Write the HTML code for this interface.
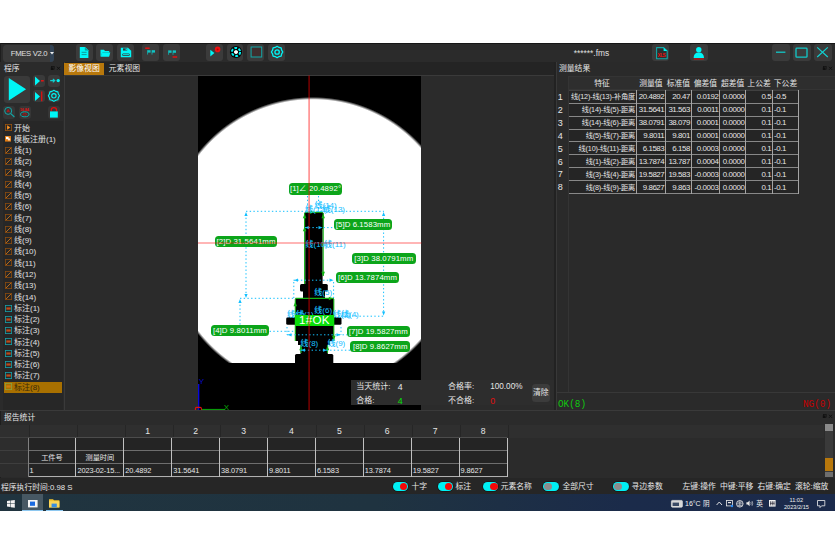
<!DOCTYPE html>
<html><head><meta charset="utf-8"><title>FMES V2.0</title>
<style>
html,body{margin:0;padding:0;background:#fff;}
body{width:835px;height:555px;position:relative;overflow:hidden;font-family:"Liberation Sans","Noto Sans CJK SC",sans-serif;font-size:7.8px;color:#d4d4d4;}
div{position:absolute;box-sizing:border-box;}
svg{position:absolute;overflow:visible;}
.t{white-space:nowrap;}
.btn{background:#3b3b3b;border-radius:3px;}
.lbl{background:#0ca51a;border-radius:3.5px;color:#fff;font-size:7.8px;letter-spacing:0.1px;white-space:nowrap;text-align:center;}
.cy{font-weight:500;color:#18c0ff;font-size:8px;white-space:nowrap;}
table{border-collapse:collapse;position:absolute;}
td{padding:0;white-space:nowrap;overflow:hidden;}
</style></head><body>

<div style="left:0px;top:43px;width:835px;height:451px;background:#2b2b2b;"></div>
<div style="left:0px;top:42.8px;width:835px;height:1px;background:#161616;"></div>
<div style="left:0px;top:43px;width:1.2px;height:451px;background:#1e1e1e;"></div>
<div style="left:3px;top:44.5px;width:50.5px;height:17.3px;background:#3a3a3a;border-radius:3.5px;"></div>
<div style="left:49.6px;top:44.5px;width:4.6px;height:17.3px;background:#324355;border-radius:0 3.5px 3.5px 0;"></div>
<div class="t" style="left:10.8px;top:44.6px;height:17.3px;line-height:17.3px;font-size:7.7px;letter-spacing:-0.33px;color:#e0e0e0;">FMES V2.0</div>
<svg style="left:49.8px;top:51.6px" width="4" height="3"><path d="M0 0H4L2 2.6Z" fill="#f0f0f0"/></svg>
<div class="btn" style="left:76px;top:44.3px;width:16.8px;height:16.6px;"></div>
<div class="btn" style="left:96.4px;top:44.3px;width:16.8px;height:16.6px;"></div>
<div class="btn" style="left:116.8px;top:44.3px;width:16.8px;height:16.6px;"></div>
<div class="btn" style="left:142px;top:44.3px;width:16.8px;height:16.6px;"></div>
<div class="btn" style="left:162.8px;top:44.3px;width:16.8px;height:16.6px;"></div>
<div class="btn" style="left:206.2px;top:44.3px;width:16.8px;height:16.6px;"></div>
<div class="btn" style="left:226.7px;top:44.3px;width:16.8px;height:16.6px;"></div>
<div class="btn" style="left:247.3px;top:44.3px;width:16.8px;height:16.6px;"></div>
<div class="btn" style="left:268.3px;top:44.3px;width:16.8px;height:16.6px;"></div>
<svg style="left:79px;top:46px" width="11" height="13" viewBox="0 0 11 13"><path d="M0.8 1H6.2L9.4 4.2V12.1H0.8Z" fill="#00f6f6"/><path d="M6.2 1V4.2H9.4" fill="#0aa" stroke="#0a8a8a" stroke-width=".5"/><path d="M2.6 6.3H7.6M2.6 8.6H7.6" stroke="#0b9a9a" stroke-width="1"/></svg>
<svg style="left:99.5px;top:48.5px" width="11" height="9" viewBox="0 0 11 9"><path d="M0.5 0.8H4L5 2H9.2V7.6H0.5Z" fill="#00f6f6"/><path d="M2.2 4.3L1 7.4" stroke="#0a9c9c" stroke-width=".6"/><path d="M2.4 3.6H10.3L9 7.6H1Z" fill="#00f6f6"/><path d="M2.3 3.55H9.2" stroke="#0a9c9c" stroke-width=".5"/></svg>
<svg style="left:119.5px;top:47px" width="12" height="11" viewBox="0 0 12 11"><path d="M0.8 0.8H8L11.2 3.8V10.2H0.8Z" fill="#00f6f6"/><path d="M3 1.3H7.2V3.6H3Z" fill="#3a3a3a"/><rect x="5.6" y="1.6" width="1.2" height="1.6" fill="#00f6f6"/><rect x="2.4" y="6.4" width="7.2" height="2.6" rx=".8" fill="#3a3a3a"/><rect x="3" y="7.2" width="6" height="1" fill="#00f6f6"/></svg>
<svg style="left:145px;top:47px" width="12" height="8" viewBox="0 0 12 8"><path d="M0.2 1.2H4.6" stroke="#f01010" stroke-width="1.4"/><path d="M2.6 3.2V7.6000000000000005" stroke="#12a8a8" stroke-width=".9"/><path d="M2.6 3.2H5.6V5.6H2.6Z" fill="#10c4c4"/><path d="M7 3.2V7.6000000000000005" stroke="#12a8a8" stroke-width=".9"/><path d="M7 3.2H10V5.6H7Z" fill="#10c4c4"/></svg>
<svg style="left:167px;top:50px" width="12" height="9" viewBox="0 0 12 9"><path d="M1.6 0.4V4.800000000000001" stroke="#12a8a8" stroke-width=".9"/><path d="M1.6 0.4H4.6V2.8H1.6Z" fill="#10c4c4"/><path d="M6 0.4V4.800000000000001" stroke="#12a8a8" stroke-width=".9"/><path d="M6 0.4H9V2.8H6Z" fill="#10c4c4"/><path d="M5.6 7H10.2" stroke="#f01010" stroke-width="1.4"/></svg>
<svg style="left:209px;top:46px" width="13" height="12" viewBox="0 0 13 12"><path d="M1.3 3.8L5.4 7.1L1.3 10.4Z" fill="#00f6f6"/><circle cx="8.6" cy="3.4" r="2.8" fill="#f01010"/><circle cx="8.6" cy="3.4" r="1" fill="#c00000"/></svg>
<svg style="left:228.7px;top:45.3px" width="14" height="14" viewBox="0 0 14 14"><circle cx="7" cy="7" r="6.1" fill="#050505"/><circle cx="7" cy="7" r="4.1" fill="none" stroke="#00f6f6" stroke-width="2" stroke-dasharray="2.7 1.6"/><path d="M7 4.9L8.9 6L8.9 8.1L7 9.2L5.1 8.1L5.1 6Z" fill="#fff"/></svg>
<svg style="left:250px;top:46.3px" width="13" height="12" viewBox="0 0 13 12"><rect x="1.1" y="1" width="10.6" height="10" fill="#3e2e2e" stroke="#12a8a8" stroke-width="1"/></svg>
<svg style="left:270px;top:45.3px" width="14" height="14" viewBox="0 0 14 14"><path d="M12.80 7.00 L11.63 8.88 L11.13 11.03 L8.98 11.53 L7.10 12.70 L5.22 11.53 L3.07 11.03 L2.57 8.88 L1.40 7.00 L2.57 5.12 L3.07 2.97 L5.22 2.47 L7.10 1.30 L8.98 2.47 L11.13 2.97 L11.63 5.12Z" fill="none" stroke="#00f6f6" stroke-width="1.3" stroke-linejoin="round"/><circle cx="7.1" cy="7" r="2.2" fill="none" stroke="#00f6f6" stroke-width="1.3"/></svg>
<div class="t" style="left:573.8px;top:45.1px;height:16px;line-height:16px;font-size:8.4px;color:#e0e0e0;">******.fms</div>
<div class="btn" style="left:652px;top:44.3px;width:17px;height:16.6px;"></div>
<div class="btn" style="left:690px;top:44.3px;width:17.5px;height:16.6px;"></div>
<div class="btn" style="left:772px;top:44.3px;width:17.6px;height:16.6px;"></div>
<div class="btn" style="left:793px;top:44.3px;width:17.6px;height:16.6px;"></div>
<div class="btn" style="left:814px;top:44.3px;width:17.6px;height:16.6px;"></div>
<svg style="left:654.5px;top:45.5px" width="14" height="15" viewBox="0 0 14 15"><path d="M1.6 1.6H8.6L12.2 5V12.8H1.6Z" fill="#2e2e2e" stroke="#12a8a8" stroke-width="1.1" stroke-linejoin="round"/><path d="M8.6 1.6V5H12.2Z" fill="#00f6f6"/><text x="2.6" y="11.2" font-size="4.6" font-weight="bold" fill="#f01010" font-family="Liberation Sans,sans-serif" textLength="8">XLS</text></svg>
<svg style="left:692px;top:45.5px" width="14" height="15" viewBox="0 0 14 15"><circle cx="6.8" cy="3.7" r="2.7" fill="#00f6f6"/><path d="M1.6 12.1Q1.6 6.4 6.8 6.4Q12 6.4 12 12.1Z" fill="#00f6f6"/><path d="M1.8 13H11.8" stroke="#e01010" stroke-width="1.1"/></svg>
<svg style="left:772px;top:44px" width="18" height="17" viewBox="0 0 18 17"><path d="M4 8.2H13.4" stroke="#12c8c8" stroke-width="1.3"/></svg>
<svg style="left:793px;top:44px" width="18" height="17" viewBox="0 0 18 17"><rect x="3" y="4.2" width="11" height="9" rx=".8" fill="none" stroke="#12c8c8" stroke-width="1.3"/></svg>
<svg style="left:814px;top:44px" width="18" height="17" viewBox="0 0 18 17"><path d="M3.2 3.4L13.8 13M13.8 3.4L3.2 13" stroke="#12d0d0" stroke-width="1.2"/></svg>
<div style="left:0px;top:62px;width:835px;height:13.5px;background:#242424;"></div>
<div style="left:0px;top:62px;width:63px;height:349px;background:#2b2b2b;"></div>
<div style="left:3px;top:121px;width:59.5px;height:289px;background:#272727;"></div>
<div class="t" style="left:4px;top:62.5px;height:12px;line-height:12px;color:#e6e6e6;">程序</div>
<div style="left:63.6px;top:62px;width:1px;height:348.5px;background:#3a3a3a;"></div>
<div style="left:3.6px;top:75.6px;width:26.8px;height:27px;background:#3a3a3a;border-radius:3px;"></div>
<div style="left:33.3px;top:75.2px;width:12px;height:11.6px;background:#3a3a3a;border-radius:3px;"></div>
<div style="left:47.7px;top:75.2px;width:12px;height:11.6px;background:#3a3a3a;border-radius:3px;"></div>
<div style="left:33.3px;top:89.6px;width:12px;height:12.2px;background:#3a3a3a;border-radius:3px;"></div>
<div style="left:47.7px;top:89.6px;width:12px;height:12.2px;background:#3a3a3a;border-radius:3px;"></div>
<div style="left:3.4px;top:106.2px;width:12px;height:12.6px;background:#363636;border-radius:3px;"></div>
<div style="left:18.5px;top:106.2px;width:12px;height:12.6px;background:#363636;border-radius:3px;"></div>
<div style="left:47.7px;top:106.2px;width:12px;height:12.6px;background:#363636;border-radius:3px;"></div>
<svg style="left:3px;top:75px" width="28" height="28" viewBox="0 0 28 28"><path d="M5.8 3.1L23.1 14.2L5.8 25.4Z" fill="#00f6f6"/></svg>
<svg style="left:33px;top:75px" width="13" height="12" viewBox="0 0 13 12"><path d="M2 1.5L7 6L2 10.5Z" fill="#00f6f6"/><path d="M8 5.8H10.8" stroke="#f01010" stroke-width="1.4"/></svg>
<svg style="left:47.5px;top:75px" width="13" height="12" viewBox="0 0 13 12"><path d="M2.2 5.6H7M4.8 3.9L6.8 5.6L4.8 7.3" stroke="#10d0d0" stroke-width="1.1" fill="none"/><circle cx="10.2" cy="5.6" r="1.65" fill="#00f6f6"/></svg>
<svg style="left:33px;top:89.5px" width="13" height="13" viewBox="0 0 13 13"><path d="M2 1.9L7 6.4L2 10.9Z" fill="#00f6f6"/><path d="M8.7 1.5V11.3" stroke="#e01010" stroke-width="1.3"/></svg>
<svg style="left:47px;top:88.8px" width="14" height="14" viewBox="0 0 14 14"><path d="M12.50 6.80 L11.35 8.64 L10.86 10.76 L8.74 11.25 L6.90 12.40 L5.06 11.25 L2.94 10.76 L2.45 8.64 L1.30 6.80 L2.45 4.96 L2.94 2.84 L5.06 2.35 L6.90 1.20 L8.74 2.35 L10.86 2.84 L11.35 4.96Z" fill="none" stroke="#00f6f6" stroke-width="1.1" stroke-linejoin="round"/><circle cx="6.9" cy="6.8" r="2.2" fill="none" stroke="#00f6f6" stroke-width="1.1"/></svg>
<svg style="left:3px;top:106px" width="13" height="13" viewBox="0 0 13 13"><circle cx="5.2" cy="4.9" r="3.5" fill="none" stroke="#12a8a8" stroke-width="1"/><path d="M7.8 7.6L11.4 11" stroke="#12a8a8" stroke-width="1.1"/><path d="M4 6.2L5.2 3.4L6.4 6.2M4.5 5.3H5.9" stroke="#e01010" stroke-width=".7" fill="none"/></svg>
<svg style="left:18px;top:106px" width="13" height="13" viewBox="0 0 13 13"><text x="1.8" y="4.9" font-size="3.8" font-weight="bold" fill="#e01010" font-family="Liberation Sans,sans-serif" textLength="9">16.84</text><ellipse cx="6.8" cy="8.3" rx="4.2" ry="2.5" fill="none" stroke="#12a8a8" stroke-width="1"/><ellipse cx="6.8" cy="8.3" rx="1.8" ry="1" fill="none" stroke="#c01010" stroke-width=".8"/></svg>
<svg style="left:47px;top:106px" width="14" height="13" viewBox="0 0 14 13"><path d="M4.2 5.6V4.4A2.7 2.7 0 0 1 9.6 4.4V5.6" fill="none" stroke="#e01010" stroke-width="1.2"/><rect x="3" y="5.4" width="7.8" height="6.2" fill="#00f6f6"/></svg>
<div class="t" style="left:14px;top:122.5px;height:12px;line-height:12px;color:#e0e0e0;font-size:8px;">开始</div>
<svg style="left:5px;top:124.2px" width="7" height="7"><rect x="0.4" y="0.4" width="6.2" height="6.2" fill="none" stroke="#9a5410" stroke-width="0.8"/><path d="M2.1 1.3L5.2 3.5L2.1 5.7Z" fill="#ff9422"/></svg>
<div class="t" style="left:14px;top:133.76999999999998px;height:12px;line-height:12px;color:#e0e0e0;font-size:8px;">模板注册(1)</div>
<svg style="left:5.4px;top:136.07px" width="6" height="6"><rect x="0" y="0" width="6" height="5.6" fill="#e07a10"/><rect x="1" y="0.8" width="2.6" height="2.4" fill="#fff"/><rect x="3" y="2.4" width="2.2" height="2" fill="#fff" opacity=".85"/></svg>
<div class="t" style="left:14px;top:145.04px;height:12px;line-height:12px;color:#e0e0e0;font-size:8px;">线(1)</div>
<svg style="left:5px;top:146.74px" width="7" height="7"><rect x="0.4" y="0.4" width="6.2" height="6.2" fill="none" stroke="#8a4c10" stroke-width="0.8"/><path d="M1 6L6 1" stroke="#d87818" stroke-width="0.8"/></svg>
<div class="t" style="left:14px;top:156.31px;height:12px;line-height:12px;color:#e0e0e0;font-size:8px;">线(2)</div>
<svg style="left:5px;top:158.01000000000002px" width="7" height="7"><rect x="0.4" y="0.4" width="6.2" height="6.2" fill="none" stroke="#8a4c10" stroke-width="0.8"/><path d="M1 6L6 1" stroke="#d87818" stroke-width="0.8"/></svg>
<div class="t" style="left:14px;top:167.57999999999998px;height:12px;line-height:12px;color:#e0e0e0;font-size:8px;">线(3)</div>
<svg style="left:5px;top:169.28px" width="7" height="7"><rect x="0.4" y="0.4" width="6.2" height="6.2" fill="none" stroke="#8a4c10" stroke-width="0.8"/><path d="M1 6L6 1" stroke="#d87818" stroke-width="0.8"/></svg>
<div class="t" style="left:14px;top:178.84999999999997px;height:12px;line-height:12px;color:#e0e0e0;font-size:8px;">线(4)</div>
<svg style="left:5px;top:180.54999999999998px" width="7" height="7"><rect x="0.4" y="0.4" width="6.2" height="6.2" fill="none" stroke="#8a4c10" stroke-width="0.8"/><path d="M1 6L6 1" stroke="#d87818" stroke-width="0.8"/></svg>
<div class="t" style="left:14px;top:190.12px;height:12px;line-height:12px;color:#e0e0e0;font-size:8px;">线(5)</div>
<svg style="left:5px;top:191.82000000000002px" width="7" height="7"><rect x="0.4" y="0.4" width="6.2" height="6.2" fill="none" stroke="#8a4c10" stroke-width="0.8"/><path d="M1 6L6 1" stroke="#d87818" stroke-width="0.8"/></svg>
<div class="t" style="left:14px;top:201.39px;height:12px;line-height:12px;color:#e0e0e0;font-size:8px;">线(6)</div>
<svg style="left:5px;top:203.09px" width="7" height="7"><rect x="0.4" y="0.4" width="6.2" height="6.2" fill="none" stroke="#8a4c10" stroke-width="0.8"/><path d="M1 6L6 1" stroke="#d87818" stroke-width="0.8"/></svg>
<div class="t" style="left:14px;top:212.65999999999997px;height:12px;line-height:12px;color:#e0e0e0;font-size:8px;">线(7)</div>
<svg style="left:5px;top:214.35999999999999px" width="7" height="7"><rect x="0.4" y="0.4" width="6.2" height="6.2" fill="none" stroke="#8a4c10" stroke-width="0.8"/><path d="M1 6L6 1" stroke="#d87818" stroke-width="0.8"/></svg>
<div class="t" style="left:14px;top:223.92999999999998px;height:12px;line-height:12px;color:#e0e0e0;font-size:8px;">线(8)</div>
<svg style="left:5px;top:225.63px" width="7" height="7"><rect x="0.4" y="0.4" width="6.2" height="6.2" fill="none" stroke="#8a4c10" stroke-width="0.8"/><path d="M1 6L6 1" stroke="#d87818" stroke-width="0.8"/></svg>
<div class="t" style="left:14px;top:235.2px;height:12px;line-height:12px;color:#e0e0e0;font-size:8px;">线(9)</div>
<svg style="left:5px;top:236.9px" width="7" height="7"><rect x="0.4" y="0.4" width="6.2" height="6.2" fill="none" stroke="#8a4c10" stroke-width="0.8"/><path d="M1 6L6 1" stroke="#d87818" stroke-width="0.8"/></svg>
<div class="t" style="left:14px;top:246.46999999999997px;height:12px;line-height:12px;color:#e0e0e0;font-size:8px;">线(10)</div>
<svg style="left:5px;top:248.17px" width="7" height="7"><rect x="0.4" y="0.4" width="6.2" height="6.2" fill="none" stroke="#8a4c10" stroke-width="0.8"/><path d="M1 6L6 1" stroke="#d87818" stroke-width="0.8"/></svg>
<div class="t" style="left:14px;top:257.74px;height:12px;line-height:12px;color:#e0e0e0;font-size:8px;">线(11)</div>
<svg style="left:5px;top:259.44px" width="7" height="7"><rect x="0.4" y="0.4" width="6.2" height="6.2" fill="none" stroke="#8a4c10" stroke-width="0.8"/><path d="M1 6L6 1" stroke="#d87818" stroke-width="0.8"/></svg>
<div class="t" style="left:14px;top:269.01px;height:12px;line-height:12px;color:#e0e0e0;font-size:8px;">线(12)</div>
<svg style="left:5px;top:270.71px" width="7" height="7"><rect x="0.4" y="0.4" width="6.2" height="6.2" fill="none" stroke="#8a4c10" stroke-width="0.8"/><path d="M1 6L6 1" stroke="#d87818" stroke-width="0.8"/></svg>
<div class="t" style="left:14px;top:280.28px;height:12px;line-height:12px;color:#e0e0e0;font-size:8px;">线(13)</div>
<svg style="left:5px;top:281.97999999999996px" width="7" height="7"><rect x="0.4" y="0.4" width="6.2" height="6.2" fill="none" stroke="#8a4c10" stroke-width="0.8"/><path d="M1 6L6 1" stroke="#d87818" stroke-width="0.8"/></svg>
<div class="t" style="left:14px;top:291.54999999999995px;height:12px;line-height:12px;color:#e0e0e0;font-size:8px;">线(14)</div>
<svg style="left:5px;top:293.24999999999994px" width="7" height="7"><rect x="0.4" y="0.4" width="6.2" height="6.2" fill="none" stroke="#8a4c10" stroke-width="0.8"/><path d="M1 6L6 1" stroke="#d87818" stroke-width="0.8"/></svg>
<div class="t" style="left:14px;top:302.82px;height:12px;line-height:12px;color:#e0e0e0;font-size:8px;">标注(1)</div>
<svg style="left:5px;top:304.52px" width="7" height="7"><rect x="0.4" y="0.4" width="6.2" height="6.2" fill="none" stroke="#18a0a8" stroke-width="0.8"/><rect x="1.3" y="2.4" width="4.4" height="2.2" fill="#c04a18"/></svg>
<div class="t" style="left:14px;top:314.09px;height:12px;line-height:12px;color:#e0e0e0;font-size:8px;">标注(2)</div>
<svg style="left:5px;top:315.78999999999996px" width="7" height="7"><rect x="0.4" y="0.4" width="6.2" height="6.2" fill="none" stroke="#18a0a8" stroke-width="0.8"/><rect x="1.3" y="2.4" width="4.4" height="2.2" fill="#c04a18"/></svg>
<div class="t" style="left:14px;top:325.35999999999996px;height:12px;line-height:12px;color:#e0e0e0;font-size:8px;">标注(3)</div>
<svg style="left:5px;top:327.05999999999995px" width="7" height="7"><rect x="0.4" y="0.4" width="6.2" height="6.2" fill="none" stroke="#18a0a8" stroke-width="0.8"/><rect x="1.3" y="2.4" width="4.4" height="2.2" fill="#c04a18"/></svg>
<div class="t" style="left:14px;top:336.63px;height:12px;line-height:12px;color:#e0e0e0;font-size:8px;">标注(4)</div>
<svg style="left:5px;top:338.33px" width="7" height="7"><rect x="0.4" y="0.4" width="6.2" height="6.2" fill="none" stroke="#18a0a8" stroke-width="0.8"/><rect x="1.3" y="2.4" width="4.4" height="2.2" fill="#c04a18"/></svg>
<div class="t" style="left:14px;top:347.9px;height:12px;line-height:12px;color:#e0e0e0;font-size:8px;">标注(5)</div>
<svg style="left:5px;top:349.59999999999997px" width="7" height="7"><rect x="0.4" y="0.4" width="6.2" height="6.2" fill="none" stroke="#18a0a8" stroke-width="0.8"/><rect x="1.3" y="2.4" width="4.4" height="2.2" fill="#c04a18"/></svg>
<div class="t" style="left:14px;top:359.16999999999996px;height:12px;line-height:12px;color:#e0e0e0;font-size:8px;">标注(6)</div>
<svg style="left:5px;top:360.86999999999995px" width="7" height="7"><rect x="0.4" y="0.4" width="6.2" height="6.2" fill="none" stroke="#18a0a8" stroke-width="0.8"/><rect x="1.3" y="2.4" width="4.4" height="2.2" fill="#c04a18"/></svg>
<div class="t" style="left:14px;top:370.44px;height:12px;line-height:12px;color:#e0e0e0;font-size:8px;">标注(7)</div>
<svg style="left:5px;top:372.14px" width="7" height="7"><rect x="0.4" y="0.4" width="6.2" height="6.2" fill="none" stroke="#18a0a8" stroke-width="0.8"/><rect x="1.3" y="2.4" width="4.4" height="2.2" fill="#c04a18"/></svg>
<div style="left:3.5px;top:381.71px;width:58.5px;height:11.1px;background:#a87000;"></div>
<div class="t" style="left:14px;top:381.71px;height:12px;line-height:12px;color:#3a2a08;font-size:8px;">标注(8)</div>
<svg style="left:5px;top:383.40999999999997px" width="7" height="7"><rect x="0.4" y="0.4" width="6.2" height="6.2" fill="none" stroke="#8aa040" stroke-width="0.8"/><rect x="1.3" y="2.4" width="4.4" height="2.2" fill="#d07a10"/></svg>
<svg style="left:50px;top:66px" width="11" height="5"><rect x="0.8" y="1.4" width="2.6" height="2.6" fill="#111"/><rect x="1.6" y="0.6" width="2.6" height="2.6" fill="none" stroke="#111" stroke-width=".7"/><path d="M7 0.8L10 3.8M10 0.8L7 3.8" stroke="#111" stroke-width="1"/></svg>
<div style="left:64.3px;top:63px;width:40.2px;height:11.6px;background:#b8780c;"></div>
<div class="t" style="left:68.5px;top:62.8px;height:12px;line-height:12px;color:#fff;">影像视图</div>
<div class="t" style="left:108.8px;top:62.8px;height:12px;line-height:12px;color:#e6e6e6;">元素视图</div>
<div style="left:64px;top:74.8px;width:490px;height:0.8px;background:#3a3a3a;"></div>
<div style="left:198.2px;top:75.5px;width:223.10000000000002px;height:334.5px;background:#000;overflow:hidden;">
<div style="left:0;top:0;width:223.10000000000002px;height:287.5px;background:radial-gradient(circle at 114.80000000000001px 167.4px,#fff 0,#fff 143.7px,#000 146.5px);"></div>
</div>
<svg style="left:0;top:0" width="835" height="555" viewBox="0 0 835 555">
<g fill="#000">
<rect x="304.2" y="212" width="19.2" height="17" rx="1.5"/><rect x="305.2" y="225" width="17.4" height="60"/>
<rect x="300" y="284" width="27.8" height="7.6" rx="1.5"/>
<rect x="303" y="290" width="22" height="9"/>
<rect x="295.3" y="298" width="38.5" height="43" rx="1"/>
<rect x="286.2" y="317.2" width="55.3" height="7.6" rx="1.5"/>
<rect x="298" y="340" width="32" height="5"/>
<rect x="300.5" y="344" width="27.3" height="11"/>
<rect x="295" y="354" width="38.3" height="10" rx="1.5"/>
</g>
<g stroke="#14b414" stroke-width="1.1" fill="none">
<path d="M304.6 213V284"/><path d="M323.2 213V276"/>
<path d="M305 212.3H323"/>
<path d="M295.5 298.4H333.6"/>
<path d="M295.3 299V341"/><path d="M333.8 299V341"/>
<path d="M301 345V353"/><path d="M327.5 345V353"/>
</g>
<path d="M304.6 213.8L302.84000000000003 218.2L306.36 218.2Z" fill="#14b414"/>
<path d="M323.2 213.8L321.44 218.2L324.96 218.2Z" fill="#14b414"/>
<path d="M304.6 226.8L302.84000000000003 231.2L306.36 231.2Z" fill="#14b414"/>
<path d="M323.2 276.2L321.44 271.8L324.96 271.8Z" fill="#14b414"/>
<path d="M333.2 298.4L328.8 296.64L328.8 300.15999999999997Z" fill="#14b414"/>
<path d="M295.3 301.8L293.54 306.2L297.06 306.2Z" fill="#14b414"/>
<path d="M333.8 340.2L332.04 335.8L335.56 335.8Z" fill="#14b414"/>
<path d="M301 345.8L299.24 350.2L302.76 350.2Z" fill="#14b414"/>
<path d="M327.5 345.8L325.74 350.2L329.26 350.2Z" fill="#14b414"/>
<path d="M314.2 212.3L309.8 210.54000000000002L309.8 214.06Z" fill="#14b414"/>
<g stroke="#14c0ff" stroke-width="1" fill="none" stroke-dasharray="1.4 2.3">
<path d="M246 211.3H384"/>
<path d="M246 214V296"/>
<path d="M383.6 214V313"/>
<path d="M240 298.3H295"/>
<path d="M240 301V329"/>
<path d="M240 331.3H295"/>
<path d="M341 316.2H384"/>
<path d="M293.5 280.2H334"/>
<path d="M293.8 282V298"/><path d="M333.6 282V298"/>
<path d="M287 334.8H347"/>
<path d="M287 327V335"/><path d="M341 327V335"/>
<path d="M300.5 350.2H350.5"/>
<path d="M305 227.6H334"/>
<path d="M307.5 196V211"/><path d="M318.5 196V211"/>
</g>
<path d="M246 212.0L244.4 216.0L247.6 216.0Z" fill="#14c0ff"/>
<path d="M246 298.0L244.4 294.0L247.6 294.0Z" fill="#14c0ff"/>
<path d="M383.6 212.0L382.0 216.0L385.20000000000005 216.0Z" fill="#14c0ff"/>
<path d="M383.6 315.5L382.0 311.5L385.20000000000005 311.5Z" fill="#14c0ff"/>
<path d="M240 299.0L238.4 303.0L241.6 303.0Z" fill="#14c0ff"/>
<path d="M240 331.0L238.4 327.0L241.6 327.0Z" fill="#14c0ff"/>
<path d="M294.0 280.2L298.0 278.59999999999997L298.0 281.8Z" fill="#14c0ff"/>
<path d="M333.5 280.2L329.5 278.59999999999997L329.5 281.8Z" fill="#14c0ff"/>
<path d="M287.5 334.8L291.5 333.2L291.5 336.40000000000003Z" fill="#14c0ff"/>
<path d="M340.5 334.8L336.5 333.2L336.5 336.40000000000003Z" fill="#14c0ff"/>
<path d="M301.0 350.2L305.0 348.59999999999997L305.0 351.8Z" fill="#14c0ff"/>
<path d="M327.0 350.2L323.0 348.59999999999997L323.0 351.8Z" fill="#14c0ff"/>
<path d="M305.0 227.6L309.0 226.0L309.0 229.2Z" fill="#14c0ff"/>
<path d="M322.5 227.6L318.5 226.0L318.5 229.2Z" fill="#14c0ff"/>
<path d="M198.7 384V410" stroke="#0808e8" stroke-width="1.3"/>
<path d="M201 409.5H225" stroke="#089808" stroke-width="1.2"/>
<path d="M195.4 410V408.6Q195.4 407.4 196.6 407.4H200.2Q201.4 407.4 201.4 408.6V410" fill="none" stroke="#e01010" stroke-width="1.1"/>
<text x="198.8" y="384.2" font-size="8" fill="#0a0ad0" font-family="Liberation Sans,sans-serif">Y</text>
<text x="223.8" y="409.8" font-size="8" fill="#08a808" font-family="Liberation Sans,sans-serif">X</text>
</svg>
<div class="cy" style="left:314.5px;top:200.5px;height:9px;line-height:9px;">线(14)</div>
<div class="cy" style="left:305px;top:205px;height:9px;line-height:9px;">线(12)</div>
<div class="cy" style="left:322.8px;top:205px;height:9px;line-height:9px;">线(13)</div>
<div class="cy" style="left:305.5px;top:240px;height:9px;line-height:9px;">线(10)</div>
<div class="cy" style="left:324px;top:240px;height:9px;line-height:9px;">线(11)</div>
<div class="cy" style="left:314.3px;top:288px;height:9px;line-height:9px;">线(5)</div>
<div class="cy" style="left:314.3px;top:306.2px;height:9px;line-height:9px;">线(6)</div>
<div class="cy" style="left:287px;top:310px;height:9px;line-height:9px;">线(7)</div>
<div class="cy" style="left:296px;top:310px;height:9px;line-height:9px;">线(1)</div>
<div class="cy" style="left:333px;top:310px;height:9px;line-height:9px;">线(2)</div>
<div class="cy" style="left:341px;top:310px;height:9px;line-height:9px;">线(4)</div>
<div class="cy" style="left:300.5px;top:339.2px;height:9px;line-height:9px;">线(8)</div>
<div class="cy" style="left:327.5px;top:339.2px;height:9px;line-height:9px;">线(9)</div>
<div class="lbl" style="left:289px;top:183.4px;width:53px;height:11.199999999999989px;line-height:11.199999999999989px;">[1]∠ 20.4892°</div>
<div class="lbl" style="left:334px;top:219.1px;width:58px;height:11.099999999999994px;line-height:11.099999999999994px;">[5]D 6.1583mm</div>
<div class="lbl" style="left:215px;top:236px;width:62px;height:11.199999999999989px;line-height:11.199999999999989px;">[2]D 31.5641mm</div>
<div class="lbl" style="left:352px;top:253.3px;width:63.60000000000002px;height:11.199999999999989px;line-height:11.199999999999989px;">[3]D 38.0791mm</div>
<div class="lbl" style="left:336px;top:271.8px;width:63px;height:11.099999999999966px;line-height:11.099999999999966px;">[6]D 13.7874mm</div>
<div class="lbl" style="left:210.8px;top:325px;width:58.19999999999999px;height:11.199999999999989px;line-height:11.199999999999989px;">[4]D 9.8011mm</div>
<div class="lbl" style="left:346.7px;top:326.2px;width:63.10000000000002px;height:11.300000000000011px;line-height:11.300000000000011px;">[7]D 19.5827mm</div>
<div class="lbl" style="left:350.4px;top:341.2px;width:59.60000000000002px;height:11.199999999999989px;line-height:11.199999999999989px;">[8]D 9.8627mm</div>
<div style="left:294.5px;top:315px;width:39.7px;height:10.6px;line-height:10.9px;background:#0ade0a;color:#fff;font-size:11.6px;letter-spacing:0.3px;text-align:center;white-space:nowrap;">1#OK</div>
<svg style="left:0;top:0" width="835" height="555" viewBox="0 0 835 555"><path d="M309.1 75.5V410" stroke="#ff0000" stroke-width="1.5" opacity=".48"/><path d="M198 242.9H421.5" stroke="#ff0000" stroke-width="1.5" opacity=".38"/></svg>
<div style="left:351px;top:379.8px;width:203px;height:25.4px;background:#2d2d2d;"></div>
<div class="t" style="left:356.3px;top:381.5px;height:10px;line-height:10px;color:#e6e6e6;font-size:8px;">当天统计:</div>
<div class="t" style="left:397.8px;top:381.5px;height:10px;line-height:10px;color:#e6e6e6;font-size:8.8px;">4</div>
<div class="t" style="left:448px;top:381.5px;height:10px;line-height:10px;color:#e6e6e6;font-size:8px;">合格率:</div>
<div class="t" style="left:490.2px;top:381.5px;height:10px;line-height:10px;color:#e6e6e6;font-size:8.2px;">100.00%</div>
<div class="t" style="left:356.3px;top:396px;height:10px;line-height:10px;color:#e6e6e6;font-size:8px;">合格:</div>
<div class="t" style="left:397.8px;top:396px;height:10px;line-height:10px;color:#08e008;font-size:8.8px;">4</div>
<div class="t" style="left:448px;top:396px;height:10px;line-height:10px;color:#e6e6e6;font-size:8px;">不合格:</div>
<div class="t" style="left:490.2px;top:396px;height:10px;line-height:10px;color:#e01010;font-size:8.8px;">0</div>
<div class="t" style="left:531.8px;top:384.2px;width:18px;height:18px;line-height:18px;background:#3c3c3c;border-radius:3.5px;text-align:center;color:#e6e6e6;">清除</div>
<div style="left:553.8px;top:62px;width:1.9px;height:348.5px;background:#222;"></div>
<div style="left:555.7px;top:62px;width:0.8px;height:348.5px;background:#383838;"></div>
<div style="left:556.5px;top:62px;width:278.5px;height:348.5px;background:#2a2a2a;"></div>
<div class="t" style="left:559px;top:62.5px;height:12px;line-height:12px;color:#e6e6e6;">测量结果</div>
<svg style="left:822px;top:66px" width="11" height="5"><rect x="0.8" y="1.4" width="2.6" height="2.6" fill="#111"/><rect x="1.6" y="0.6" width="2.6" height="2.6" fill="none" stroke="#111" stroke-width=".7"/><path d="M7 0.8L10 3.8M10 0.8L7 3.8" stroke="#111" stroke-width="1"/></svg>
<div style="left:568px;top:76px;width:267px;height:14px;background:#2e2e2e;border-top:0.7px solid #343434;border-bottom:0.7px solid #343434;"></div>
<div class="t" style="left:568px;top:76.6px;width:68.20000000000005px;height:13.4px;line-height:13.4px;text-align:center;color:#e6e6e6;">特征</div>
<div class="t" style="left:636.2px;top:76.6px;width:29.299999999999955px;height:13.4px;line-height:13.4px;text-align:center;color:#e6e6e6;">测量值</div>
<div class="t" style="left:665.5px;top:76.6px;width:25.700000000000045px;height:13.4px;line-height:13.4px;text-align:center;color:#e6e6e6;">标准值</div>
<div class="t" style="left:691.2px;top:76.6px;width:28.399999999999977px;height:13.4px;line-height:13.4px;text-align:center;color:#e6e6e6;">偏差值</div>
<div class="t" style="left:719.6px;top:76.6px;width:26.0px;height:13.4px;line-height:13.4px;text-align:center;color:#e6e6e6;">超差值</div>
<div class="t" style="left:745.6px;top:76.6px;width:26.899999999999977px;height:13.4px;line-height:13.4px;text-align:center;color:#e6e6e6;">上公差</div>
<div class="t" style="left:772.5px;top:76.6px;width:26.0px;height:13.4px;line-height:13.4px;text-align:center;color:#e6e6e6;">下公差</div>
<div style="left:568px;top:90.2px;width:230.5px;height:103.52px;background:#252525;"></div>
<div class="t" style="left:557.8px;top:90.8px;height:12.94px;line-height:12.94px;color:#e6e6e6;font-size:9px;">1</div>
<div class="t" style="left:568px;top:91.0px;width:68.20000000000005px;height:12.94px;line-height:12.94px;text-align:right;padding-right:1.2px;color:#e6e6e6;font-size:7.2px;letter-spacing:-0.15px;">线(12)-线(13)-补角度</div>
<div class="t" style="left:636.2px;top:91.0px;width:29.299999999999955px;height:12.94px;line-height:12.94px;text-align:right;padding-right:1.2px;color:#e6e6e6;font-size:7.9px;letter-spacing:-0.42px;">20.4892</div>
<div class="t" style="left:665.5px;top:91.0px;width:25.700000000000045px;height:12.94px;line-height:12.94px;text-align:right;padding-right:1.2px;color:#e6e6e6;font-size:7.9px;letter-spacing:-0.42px;">20.47</div>
<div class="t" style="left:691.2px;top:91.0px;width:28.399999999999977px;height:12.94px;line-height:12.94px;text-align:right;padding-right:1.2px;color:#e6e6e6;font-size:7.9px;letter-spacing:-0.42px;">0.0192</div>
<div class="t" style="left:719.6px;top:91.0px;width:26.0px;height:12.94px;line-height:12.94px;text-align:right;padding-right:1.2px;color:#e6e6e6;font-size:7.9px;letter-spacing:-0.42px;">0.0000</div>
<div class="t" style="left:745.6px;top:91.0px;width:26.899999999999977px;height:12.94px;line-height:12.94px;text-align:right;padding-right:1.2px;color:#e6e6e6;font-size:7.9px;letter-spacing:-0.42px;">0.5</div>
<div class="t" style="left:772.5px;top:91.0px;width:26.0px;height:12.94px;line-height:12.94px;text-align:left;padding-left:1.5px;color:#e6e6e6;font-size:7.9px;letter-spacing:-0.42px;">-0.5</div>
<div class="t" style="left:557.8px;top:103.74px;height:12.94px;line-height:12.94px;color:#e6e6e6;font-size:9px;">2</div>
<div class="t" style="left:568px;top:103.94px;width:68.20000000000005px;height:12.94px;line-height:12.94px;text-align:right;padding-right:1.2px;color:#e6e6e6;font-size:7.2px;letter-spacing:-0.15px;">线(14)-线(5)-距离</div>
<div class="t" style="left:636.2px;top:103.94px;width:29.299999999999955px;height:12.94px;line-height:12.94px;text-align:right;padding-right:1.2px;color:#e6e6e6;font-size:7.9px;letter-spacing:-0.42px;">31.5641</div>
<div class="t" style="left:665.5px;top:103.94px;width:25.700000000000045px;height:12.94px;line-height:12.94px;text-align:right;padding-right:1.2px;color:#e6e6e6;font-size:7.9px;letter-spacing:-0.42px;">31.563</div>
<div class="t" style="left:691.2px;top:103.94px;width:28.399999999999977px;height:12.94px;line-height:12.94px;text-align:right;padding-right:1.2px;color:#e6e6e6;font-size:7.9px;letter-spacing:-0.42px;">0.0011</div>
<div class="t" style="left:719.6px;top:103.94px;width:26.0px;height:12.94px;line-height:12.94px;text-align:right;padding-right:1.2px;color:#e6e6e6;font-size:7.9px;letter-spacing:-0.42px;">0.0000</div>
<div class="t" style="left:745.6px;top:103.94px;width:26.899999999999977px;height:12.94px;line-height:12.94px;text-align:right;padding-right:1.2px;color:#e6e6e6;font-size:7.9px;letter-spacing:-0.42px;">0.1</div>
<div class="t" style="left:772.5px;top:103.94px;width:26.0px;height:12.94px;line-height:12.94px;text-align:left;padding-left:1.5px;color:#e6e6e6;font-size:7.9px;letter-spacing:-0.42px;">-0.1</div>
<div class="t" style="left:557.8px;top:116.67999999999999px;height:12.94px;line-height:12.94px;color:#e6e6e6;font-size:9px;">3</div>
<div class="t" style="left:568px;top:116.88px;width:68.20000000000005px;height:12.94px;line-height:12.94px;text-align:right;padding-right:1.2px;color:#e6e6e6;font-size:7.2px;letter-spacing:-0.15px;">线(14)-线(6)-距离</div>
<div class="t" style="left:636.2px;top:116.88px;width:29.299999999999955px;height:12.94px;line-height:12.94px;text-align:right;padding-right:1.2px;color:#e6e6e6;font-size:7.9px;letter-spacing:-0.42px;">38.0791</div>
<div class="t" style="left:665.5px;top:116.88px;width:25.700000000000045px;height:12.94px;line-height:12.94px;text-align:right;padding-right:1.2px;color:#e6e6e6;font-size:7.9px;letter-spacing:-0.42px;">38.079</div>
<div class="t" style="left:691.2px;top:116.88px;width:28.399999999999977px;height:12.94px;line-height:12.94px;text-align:right;padding-right:1.2px;color:#e6e6e6;font-size:7.9px;letter-spacing:-0.42px;">0.0001</div>
<div class="t" style="left:719.6px;top:116.88px;width:26.0px;height:12.94px;line-height:12.94px;text-align:right;padding-right:1.2px;color:#e6e6e6;font-size:7.9px;letter-spacing:-0.42px;">0.0000</div>
<div class="t" style="left:745.6px;top:116.88px;width:26.899999999999977px;height:12.94px;line-height:12.94px;text-align:right;padding-right:1.2px;color:#e6e6e6;font-size:7.9px;letter-spacing:-0.42px;">0.1</div>
<div class="t" style="left:772.5px;top:116.88px;width:26.0px;height:12.94px;line-height:12.94px;text-align:left;padding-left:1.5px;color:#e6e6e6;font-size:7.9px;letter-spacing:-0.42px;">-0.1</div>
<div class="t" style="left:557.8px;top:129.62px;height:12.94px;line-height:12.94px;color:#e6e6e6;font-size:9px;">4</div>
<div class="t" style="left:568px;top:129.82000000000002px;width:68.20000000000005px;height:12.94px;line-height:12.94px;text-align:right;padding-right:1.2px;color:#e6e6e6;font-size:7.2px;letter-spacing:-0.15px;">线(5)-线(7)-距离</div>
<div class="t" style="left:636.2px;top:129.82000000000002px;width:29.299999999999955px;height:12.94px;line-height:12.94px;text-align:right;padding-right:1.2px;color:#e6e6e6;font-size:7.9px;letter-spacing:-0.42px;">9.8011</div>
<div class="t" style="left:665.5px;top:129.82000000000002px;width:25.700000000000045px;height:12.94px;line-height:12.94px;text-align:right;padding-right:1.2px;color:#e6e6e6;font-size:7.9px;letter-spacing:-0.42px;">9.801</div>
<div class="t" style="left:691.2px;top:129.82000000000002px;width:28.399999999999977px;height:12.94px;line-height:12.94px;text-align:right;padding-right:1.2px;color:#e6e6e6;font-size:7.9px;letter-spacing:-0.42px;">0.0001</div>
<div class="t" style="left:719.6px;top:129.82000000000002px;width:26.0px;height:12.94px;line-height:12.94px;text-align:right;padding-right:1.2px;color:#e6e6e6;font-size:7.9px;letter-spacing:-0.42px;">0.0000</div>
<div class="t" style="left:745.6px;top:129.82000000000002px;width:26.899999999999977px;height:12.94px;line-height:12.94px;text-align:right;padding-right:1.2px;color:#e6e6e6;font-size:7.9px;letter-spacing:-0.42px;">0.1</div>
<div class="t" style="left:772.5px;top:129.82000000000002px;width:26.0px;height:12.94px;line-height:12.94px;text-align:left;padding-left:1.5px;color:#e6e6e6;font-size:7.9px;letter-spacing:-0.42px;">-0.1</div>
<div class="t" style="left:557.8px;top:142.56px;height:12.94px;line-height:12.94px;color:#e6e6e6;font-size:9px;">5</div>
<div class="t" style="left:568px;top:142.76000000000002px;width:68.20000000000005px;height:12.94px;line-height:12.94px;text-align:right;padding-right:1.2px;color:#e6e6e6;font-size:7.2px;letter-spacing:-0.15px;">线(10)-线(11)-距离</div>
<div class="t" style="left:636.2px;top:142.76000000000002px;width:29.299999999999955px;height:12.94px;line-height:12.94px;text-align:right;padding-right:1.2px;color:#e6e6e6;font-size:7.9px;letter-spacing:-0.42px;">6.1583</div>
<div class="t" style="left:665.5px;top:142.76000000000002px;width:25.700000000000045px;height:12.94px;line-height:12.94px;text-align:right;padding-right:1.2px;color:#e6e6e6;font-size:7.9px;letter-spacing:-0.42px;">6.158</div>
<div class="t" style="left:691.2px;top:142.76000000000002px;width:28.399999999999977px;height:12.94px;line-height:12.94px;text-align:right;padding-right:1.2px;color:#e6e6e6;font-size:7.9px;letter-spacing:-0.42px;">0.0003</div>
<div class="t" style="left:719.6px;top:142.76000000000002px;width:26.0px;height:12.94px;line-height:12.94px;text-align:right;padding-right:1.2px;color:#e6e6e6;font-size:7.9px;letter-spacing:-0.42px;">0.0000</div>
<div class="t" style="left:745.6px;top:142.76000000000002px;width:26.899999999999977px;height:12.94px;line-height:12.94px;text-align:right;padding-right:1.2px;color:#e6e6e6;font-size:7.9px;letter-spacing:-0.42px;">0.1</div>
<div class="t" style="left:772.5px;top:142.76000000000002px;width:26.0px;height:12.94px;line-height:12.94px;text-align:left;padding-left:1.5px;color:#e6e6e6;font-size:7.9px;letter-spacing:-0.42px;">-0.1</div>
<div class="t" style="left:557.8px;top:155.5px;height:12.94px;line-height:12.94px;color:#e6e6e6;font-size:9px;">6</div>
<div class="t" style="left:568px;top:155.70000000000002px;width:68.20000000000005px;height:12.94px;line-height:12.94px;text-align:right;padding-right:1.2px;color:#e6e6e6;font-size:7.2px;letter-spacing:-0.15px;">线(1)-线(2)-距离</div>
<div class="t" style="left:636.2px;top:155.70000000000002px;width:29.299999999999955px;height:12.94px;line-height:12.94px;text-align:right;padding-right:1.2px;color:#e6e6e6;font-size:7.9px;letter-spacing:-0.42px;">13.7874</div>
<div class="t" style="left:665.5px;top:155.70000000000002px;width:25.700000000000045px;height:12.94px;line-height:12.94px;text-align:right;padding-right:1.2px;color:#e6e6e6;font-size:7.9px;letter-spacing:-0.42px;">13.787</div>
<div class="t" style="left:691.2px;top:155.70000000000002px;width:28.399999999999977px;height:12.94px;line-height:12.94px;text-align:right;padding-right:1.2px;color:#e6e6e6;font-size:7.9px;letter-spacing:-0.42px;">0.0004</div>
<div class="t" style="left:719.6px;top:155.70000000000002px;width:26.0px;height:12.94px;line-height:12.94px;text-align:right;padding-right:1.2px;color:#e6e6e6;font-size:7.9px;letter-spacing:-0.42px;">0.0000</div>
<div class="t" style="left:745.6px;top:155.70000000000002px;width:26.899999999999977px;height:12.94px;line-height:12.94px;text-align:right;padding-right:1.2px;color:#e6e6e6;font-size:7.9px;letter-spacing:-0.42px;">0.1</div>
<div class="t" style="left:772.5px;top:155.70000000000002px;width:26.0px;height:12.94px;line-height:12.94px;text-align:left;padding-left:1.5px;color:#e6e6e6;font-size:7.9px;letter-spacing:-0.42px;">-0.1</div>
<div class="t" style="left:557.8px;top:168.44px;height:12.94px;line-height:12.94px;color:#e6e6e6;font-size:9px;">7</div>
<div class="t" style="left:568px;top:168.64000000000001px;width:68.20000000000005px;height:12.94px;line-height:12.94px;text-align:right;padding-right:1.2px;color:#e6e6e6;font-size:7.2px;letter-spacing:-0.15px;">线(3)-线(4)-距离</div>
<div class="t" style="left:636.2px;top:168.64000000000001px;width:29.299999999999955px;height:12.94px;line-height:12.94px;text-align:right;padding-right:1.2px;color:#e6e6e6;font-size:7.9px;letter-spacing:-0.42px;">19.5827</div>
<div class="t" style="left:665.5px;top:168.64000000000001px;width:25.700000000000045px;height:12.94px;line-height:12.94px;text-align:right;padding-right:1.2px;color:#e6e6e6;font-size:7.9px;letter-spacing:-0.42px;">19.583</div>
<div class="t" style="left:691.2px;top:168.64000000000001px;width:28.399999999999977px;height:12.94px;line-height:12.94px;text-align:right;padding-right:1.2px;color:#e6e6e6;font-size:7.9px;letter-spacing:-0.42px;">-0.0003</div>
<div class="t" style="left:719.6px;top:168.64000000000001px;width:26.0px;height:12.94px;line-height:12.94px;text-align:right;padding-right:1.2px;color:#e6e6e6;font-size:7.9px;letter-spacing:-0.42px;">0.0000</div>
<div class="t" style="left:745.6px;top:168.64000000000001px;width:26.899999999999977px;height:12.94px;line-height:12.94px;text-align:right;padding-right:1.2px;color:#e6e6e6;font-size:7.9px;letter-spacing:-0.42px;">0.1</div>
<div class="t" style="left:772.5px;top:168.64000000000001px;width:26.0px;height:12.94px;line-height:12.94px;text-align:left;padding-left:1.5px;color:#e6e6e6;font-size:7.9px;letter-spacing:-0.42px;">-0.1</div>
<div class="t" style="left:557.8px;top:181.38px;height:12.94px;line-height:12.94px;color:#e6e6e6;font-size:9px;">8</div>
<div class="t" style="left:568px;top:181.58px;width:68.20000000000005px;height:12.94px;line-height:12.94px;text-align:right;padding-right:1.2px;color:#e6e6e6;font-size:7.2px;letter-spacing:-0.15px;">线(8)-线(9)-距离</div>
<div class="t" style="left:636.2px;top:181.58px;width:29.299999999999955px;height:12.94px;line-height:12.94px;text-align:right;padding-right:1.2px;color:#e6e6e6;font-size:7.9px;letter-spacing:-0.42px;">9.8627</div>
<div class="t" style="left:665.5px;top:181.58px;width:25.700000000000045px;height:12.94px;line-height:12.94px;text-align:right;padding-right:1.2px;color:#e6e6e6;font-size:7.9px;letter-spacing:-0.42px;">9.863</div>
<div class="t" style="left:691.2px;top:181.58px;width:28.399999999999977px;height:12.94px;line-height:12.94px;text-align:right;padding-right:1.2px;color:#e6e6e6;font-size:7.9px;letter-spacing:-0.42px;">-0.0003</div>
<div class="t" style="left:719.6px;top:181.58px;width:26.0px;height:12.94px;line-height:12.94px;text-align:right;padding-right:1.2px;color:#e6e6e6;font-size:7.9px;letter-spacing:-0.42px;">0.0000</div>
<div class="t" style="left:745.6px;top:181.58px;width:26.899999999999977px;height:12.94px;line-height:12.94px;text-align:right;padding-right:1.2px;color:#e6e6e6;font-size:7.9px;letter-spacing:-0.42px;">0.1</div>
<div class="t" style="left:772.5px;top:181.58px;width:26.0px;height:12.94px;line-height:12.94px;text-align:left;padding-left:1.5px;color:#e6e6e6;font-size:7.9px;letter-spacing:-0.42px;">-0.1</div>
<div style="left:568px;top:89.70px;width:230.5px;height:1px;background:#404040;"></div>
<div style="left:568px;top:102.64px;width:230.5px;height:1px;background:#888888;"></div>
<div style="left:568px;top:115.58px;width:230.5px;height:1px;background:#888888;"></div>
<div style="left:568px;top:128.52px;width:230.5px;height:1px;background:#888888;"></div>
<div style="left:568px;top:141.46px;width:230.5px;height:1px;background:#888888;"></div>
<div style="left:568px;top:154.40px;width:230.5px;height:1px;background:#888888;"></div>
<div style="left:568px;top:167.34px;width:230.5px;height:1px;background:#888888;"></div>
<div style="left:568px;top:180.28px;width:230.5px;height:1px;background:#888888;"></div>
<div style="left:568px;top:193.22px;width:230.5px;height:1px;background:#888888;"></div>
<div style="left:635.7px;top:90.2px;width:1px;height:103.52px;background:#a4a4a4;"></div>
<div style="left:665.0px;top:90.2px;width:1px;height:103.52px;background:#a4a4a4;"></div>
<div style="left:690.7px;top:90.2px;width:1px;height:103.52px;background:#a4a4a4;"></div>
<div style="left:719.1px;top:90.2px;width:1px;height:103.52px;background:#a4a4a4;"></div>
<div style="left:745.1px;top:90.2px;width:1px;height:103.52px;background:#a4a4a4;"></div>
<div style="left:772.0px;top:90.2px;width:1px;height:103.52px;background:#a4a4a4;"></div>
<div style="left:798.0px;top:90.2px;width:1px;height:103.52px;background:#a4a4a4;"></div>
<div style="left:556px;top:391.5px;width:279px;height:1px;background:#383838;"></div>
<div style="left:567.5px;top:76px;width:1px;height:316px;background:#343434;"></div>
<div class="t" style="left:557.8px;top:397.7px;height:13px;line-height:13px;color:#10c810;font-family:&quot;Liberation Mono&quot;,monospace;font-size:11px;transform:scaleX(.85);transform-origin:0 50%;">OK(8)</div>
<div class="t" style="left:803.2px;top:397.7px;height:13px;line-height:13px;color:#c40000;font-family:&quot;Liberation Mono&quot;,monospace;font-size:11px;transform:scaleX(.85);transform-origin:0 50%;">NG(0)</div>
<div style="left:0px;top:410.2px;width:835px;height:1.2px;background:#3a3a3a;"></div>
<div class="t" style="left:4px;top:411.5px;height:12px;line-height:12px;color:#e6e6e6;">报告统计</div>
<svg style="left:822px;top:414px" width="11" height="5"><rect x="0.8" y="1.4" width="2.6" height="2.6" fill="#111"/><rect x="1.6" y="0.6" width="2.6" height="2.6" fill="none" stroke="#111" stroke-width=".7"/><path d="M7 0.8L10 3.8M10 0.8L7 3.8" stroke="#111" stroke-width="1"/></svg>
<div style="left:0;top:424.5px;width:824px;height:13px;background:#2f2f2f;"></div>
<div style="left:0;top:437.5px;width:28px;height:39px;background:#2d2d2d;"></div>
<div style="left:28.8px;top:424.5px;width:1px;height:13px;background:#262626;"></div>
<div style="left:76.7px;top:424.5px;width:1px;height:13px;background:#262626;"></div>
<div style="left:124.6px;top:424.5px;width:1px;height:13px;background:#262626;"></div>
<div style="left:172.5px;top:424.5px;width:1px;height:13px;background:#262626;"></div>
<div style="left:220.4px;top:424.5px;width:1px;height:13px;background:#262626;"></div>
<div style="left:268.3px;top:424.5px;width:1px;height:13px;background:#262626;"></div>
<div style="left:316.2px;top:424.5px;width:1px;height:13px;background:#262626;"></div>
<div style="left:364.1px;top:424.5px;width:1px;height:13px;background:#262626;"></div>
<div style="left:412.0px;top:424.5px;width:1px;height:13px;background:#262626;"></div>
<div style="left:459.9px;top:424.5px;width:1px;height:13px;background:#262626;"></div>
<div style="left:507.8px;top:424.5px;width:1px;height:13px;background:#262626;"></div>
<div class="t" style="left:123.8px;top:425.2px;width:47.9px;height:13px;line-height:13px;text-align:center;color:#e6e6e6;font-size:8.6px;">1</div>
<div class="t" style="left:171.7px;top:425.2px;width:47.9px;height:13px;line-height:13px;text-align:center;color:#e6e6e6;font-size:8.6px;">2</div>
<div class="t" style="left:219.6px;top:425.2px;width:47.9px;height:13px;line-height:13px;text-align:center;color:#e6e6e6;font-size:8.6px;">3</div>
<div class="t" style="left:267.5px;top:425.2px;width:47.9px;height:13px;line-height:13px;text-align:center;color:#e6e6e6;font-size:8.6px;">4</div>
<div class="t" style="left:315.4px;top:425.2px;width:47.9px;height:13px;line-height:13px;text-align:center;color:#e6e6e6;font-size:8.6px;">5</div>
<div class="t" style="left:363.3px;top:425.2px;width:47.9px;height:13px;line-height:13px;text-align:center;color:#e6e6e6;font-size:8.6px;">6</div>
<div class="t" style="left:411.2px;top:425.2px;width:47.9px;height:13px;line-height:13px;text-align:center;color:#e6e6e6;font-size:8.6px;">7</div>
<div class="t" style="left:459.09999999999997px;top:425.2px;width:47.9px;height:13px;line-height:13px;text-align:center;color:#e6e6e6;font-size:8.6px;">8</div>
<div style="left:28px;top:437.5px;width:479.0px;height:39px;background:#242424;"></div>
<div class="t" style="left:28.0px;top:451.8px;width:47.9px;height:12.9px;line-height:12.9px;text-align:center;color:#e6e6e6;font-size:7.2px;">工件号</div>
<div class="t" style="left:75.9px;top:451.8px;width:47.9px;height:12.9px;line-height:12.9px;text-align:center;color:#e6e6e6;font-size:7.2px;">测量时间</div>
<div class="t" style="left:29.5px;top:464.7px;height:12.7px;line-height:12.7px;color:#e6e6e6;font-size:7.4px;letter-spacing:-0.1px;">1</div>
<div class="t" style="left:77.4px;top:464.7px;height:12.7px;line-height:12.7px;color:#e6e6e6;font-size:7.4px;letter-spacing:-0.1px;">2023-02-15...</div>
<div class="t" style="left:125.3px;top:464.7px;height:12.7px;line-height:12.7px;color:#e6e6e6;font-size:7.4px;letter-spacing:-0.1px;">20.4892</div>
<div class="t" style="left:173.2px;top:464.7px;height:12.7px;line-height:12.7px;color:#e6e6e6;font-size:7.4px;letter-spacing:-0.1px;">31.5641</div>
<div class="t" style="left:221.1px;top:464.7px;height:12.7px;line-height:12.7px;color:#e6e6e6;font-size:7.4px;letter-spacing:-0.1px;">38.0791</div>
<div class="t" style="left:269.0px;top:464.7px;height:12.7px;line-height:12.7px;color:#e6e6e6;font-size:7.4px;letter-spacing:-0.1px;">9.8011</div>
<div class="t" style="left:316.9px;top:464.7px;height:12.7px;line-height:12.7px;color:#e6e6e6;font-size:7.4px;letter-spacing:-0.1px;">6.1583</div>
<div class="t" style="left:364.8px;top:464.7px;height:12.7px;line-height:12.7px;color:#e6e6e6;font-size:7.4px;letter-spacing:-0.1px;">13.7874</div>
<div class="t" style="left:412.7px;top:464.7px;height:12.7px;line-height:12.7px;color:#e6e6e6;font-size:7.4px;letter-spacing:-0.1px;">19.5827</div>
<div class="t" style="left:460.59999999999997px;top:464.7px;height:12.7px;line-height:12.7px;color:#e6e6e6;font-size:7.4px;letter-spacing:-0.1px;">9.8627</div>
<div style="left:28px;top:437.0px;width:479.0px;height:1px;background:#4c4c4c;"></div>
<div style="left:0px;top:437.0px;width:28px;height:1px;background:#3e3e3e;"></div>
<div style="left:28px;top:450.3px;width:479.0px;height:1px;background:#6e6e6e;"></div>
<div style="left:0px;top:450.3px;width:28px;height:1px;background:#3e3e3e;"></div>
<div style="left:28px;top:463.2px;width:479.0px;height:1px;background:#6e6e6e;"></div>
<div style="left:0px;top:463.2px;width:28px;height:1px;background:#3e3e3e;"></div>
<div style="left:28px;top:475.9px;width:479.0px;height:1px;background:#b0b0b0;"></div>
<div style="left:27.5px;top:437.5px;width:1px;height:39px;background:#808080;"></div>
<div style="left:75.4px;top:437.5px;width:1px;height:39px;background:#c0c0c0;"></div>
<div style="left:123.3px;top:437.5px;width:1px;height:39px;background:#c0c0c0;"></div>
<div style="left:171.2px;top:437.5px;width:1px;height:39px;background:#c0c0c0;"></div>
<div style="left:219.1px;top:437.5px;width:1px;height:39px;background:#c0c0c0;"></div>
<div style="left:267.0px;top:437.5px;width:1px;height:39px;background:#c0c0c0;"></div>
<div style="left:314.9px;top:437.5px;width:1px;height:39px;background:#c0c0c0;"></div>
<div style="left:362.8px;top:437.5px;width:1px;height:39px;background:#c0c0c0;"></div>
<div style="left:410.7px;top:437.5px;width:1px;height:39px;background:#c0c0c0;"></div>
<div style="left:458.59999999999997px;top:437.5px;width:1px;height:39px;background:#c0c0c0;"></div>
<div style="left:506.5px;top:437.5px;width:1px;height:39px;background:#c0c0c0;"></div>
<div style="left:824.8px;top:424.2px;width:8px;height:53.3px;background:#3a3a3a;"></div>
<div style="left:824.8px;top:424.2px;width:8px;height:6.6px;background:#8a8a8a;"></div>
<div style="left:824.8px;top:457.8px;width:8px;height:13px;background:#b8780c;"></div>
<div style="left:824.8px;top:471.8px;width:8px;height:5.6px;background:#6e6e6e;"></div>
<div style="left:0px;top:478px;width:835px;height:16px;background:#262626;"></div>
<div class="t" style="left:1px;top:479.7px;height:15px;line-height:15px;color:#e6e6e6;font-size:7.8px;">程序执行时间:0.98 S</div>
<div style="left:392.5px;top:481.9px;width:15.4px;height:9.3px;border-radius:4.7px;background:#00f0f4;box-shadow:0 0 0 .7px #181818;"></div>
<div style="left:399.8px;top:482.8px;width:7.5px;height:7.5px;border-radius:50%;background:#f40808;"></div>
<div class="t" style="left:411.5px;top:480px;height:13px;line-height:13px;color:#e6e6e6;font-size:7.8px;">十字</div>
<div style="left:437.5px;top:481.9px;width:15.4px;height:9.3px;border-radius:4.7px;background:#00f0f4;box-shadow:0 0 0 .7px #181818;"></div>
<div style="left:444.8px;top:482.8px;width:7.5px;height:7.5px;border-radius:50%;background:#f40808;"></div>
<div class="t" style="left:455.5px;top:480px;height:13px;line-height:13px;color:#e6e6e6;font-size:7.8px;">标注</div>
<div style="left:482.8px;top:481.9px;width:15.4px;height:9.3px;border-radius:4.7px;background:#00f0f4;box-shadow:0 0 0 .7px #181818;"></div>
<div style="left:490.1px;top:482.8px;width:7.5px;height:7.5px;border-radius:50%;background:#f40808;"></div>
<div class="t" style="left:500.7px;top:480px;height:13px;line-height:13px;color:#e6e6e6;font-size:7.8px;">元素名称</div>
<div style="left:543.4px;top:481.9px;width:15.4px;height:9.3px;border-radius:4.7px;background:#00f0f4;box-shadow:0 0 0 .7px #181818;"></div>
<div style="left:544.1px;top:482.8px;width:7.5px;height:7.5px;border-radius:50%;background:#8c8c8c;"></div>
<div class="t" style="left:562.4px;top:480px;height:13px;line-height:13px;color:#e6e6e6;font-size:7.8px;">全部尺寸</div>
<div style="left:613.4px;top:481.9px;width:15.4px;height:9.3px;border-radius:4.7px;background:#00f0f4;box-shadow:0 0 0 .7px #181818;"></div>
<div style="left:614.1px;top:482.8px;width:7.5px;height:7.5px;border-radius:50%;background:#8c8c8c;"></div>
<div class="t" style="left:631.5px;top:480px;height:13px;line-height:13px;color:#e6e6e6;font-size:7.8px;">寻边参数</div>
<div class="t" style="left:682.4px;top:480px;height:13px;line-height:13px;color:#e6e6e6;font-size:7.8px;">左键:操作</div>
<div class="t" style="left:720px;top:480px;height:13px;line-height:13px;color:#e6e6e6;font-size:7.8px;">中键:平移</div>
<div class="t" style="left:757.5px;top:480px;height:13px;line-height:13px;color:#e6e6e6;font-size:7.8px;">右键:确定</div>
<div class="t" style="left:795px;top:480px;height:13px;line-height:13px;color:#e6e6e6;font-size:7.8px;">滚轮:缩放</div>
<div style="left:0px;top:494.3px;width:835px;height:17.2px;background:linear-gradient(90deg,#20343f 0%,#1f3340 45%,#1b2b4a 75%,#1b2a4b 100%);"></div>
<svg style="left:6.8px;top:499.5px" width="8" height="8"><path d="M0 1.1L3.3 0.6V3.6H0ZM3.8 0.5L7.8 0V3.6H3.8ZM0 4.1H3.3V7.1L0 6.6ZM3.8 4.1H7.8V7.8L3.8 7.2Z" fill="#f2f2f2"/></svg>
<div style="left:22.3px;top:494.3px;width:20.5px;height:17.2px;background:#475863;"></div>
<div style="left:22.3px;top:510.4px;width:20.5px;height:1.1px;background:#8ec8f0;"></div>
<div style="left:45.5px;top:510.4px;width:17px;height:1.1px;background:#8ec8f0;"></div>
<svg style="left:27.8px;top:499.8px" width="10" height="8"><rect x="0" y="0" width="9.6" height="7.4" fill="#f4f4f4"/><rect x="2" y="1.6" width="5" height="4.2" fill="#1a6ae0"/></svg>
<svg style="left:49px;top:499px" width="11" height="9"><path d="M0 0.3H4L5 1.3H10.4V8.4H0Z" fill="#f4c430"/><rect x="0" y="2.2" width="10.4" height="6.2" fill="#fbd65a"/><rect x="2.6" y="4.6" width="5.2" height="3.8" fill="#3a8ee0"/></svg>
<svg style="left:670.5px;top:499.5px" width="12" height="8"><rect x="0.4" y="0.4" width="11" height="6.8" rx="1" fill="#d8d8d8" stroke="#f0f0f0" stroke-width=".6"/><rect x="1.6" y="2.6" width="6.4" height="3.4" fill="#3a4a66"/></svg>
<div class="t" style="left:685px;top:499px;height:9px;line-height:9px;color:#f0f0f0;font-size:7px;">16°C</div>
<div class="t" style="left:703px;top:499px;height:9px;line-height:9px;color:#f0f0f0;font-size:6.6px;">阴</div>
<svg style="left:716px;top:501px" width="7" height="5"><path d="M0.6 4L3.3 1L6 4" stroke="#f0f0f0" stroke-width=".9" fill="none"/></svg>
<svg style="left:726px;top:500px" width="8" height="8"><rect x="0.5" y="0.5" width="6" height="5.4" fill="none" stroke="#e8e8e8" stroke-width=".8"/><rect x="2" y="2" width="3" height="1.2" fill="#e8e8e8"/><circle cx="6" cy="6" r="1.2" fill="#2a8af0"/></svg>
<svg style="left:735.5px;top:499.5px" width="8" height="8"><circle cx="3.8" cy="3.8" r="3.3" fill="none" stroke="#e8e8e8" stroke-width=".8"/><path d="M0.5 3.8H7.1M3.8 0.5V7.1M1.4 1.8Q3.8 3 6.2 1.8M1.4 5.8Q3.8 4.6 6.2 5.8" stroke="#e8e8e8" stroke-width=".6" fill="none"/></svg>
<svg style="left:745.5px;top:500px" width="9" height="7"><path d="M0.4 2.2H1.8L3.6 0.6V6.2L1.8 4.6H0.4Z" fill="#e8e8e8"/><path d="M4.8 2Q5.6 3.4 4.8 4.8M6 1Q7.4 3.4 6 5.8" stroke="#e8e8e8" stroke-width=".6" fill="none"/></svg>
<div class="t" style="left:756.2px;top:499px;height:9px;line-height:9px;color:#f0f0f0;font-size:6.7px;">英</div>
<svg style="left:769px;top:500px" width="7" height="7"><rect x="0" y="0" width="6.6" height="6.6" fill="#f0f0f0"/><path d="M1.6 1.2V5.4M3.3 1.2V5.4M5 1.2V5.4M1 3.3H5.6" stroke="#223" stroke-width=".7"/></svg>
<div class="t" style="left:789.5px;top:495.8px;height:9px;line-height:9px;color:#f0f0f0;font-size:5.6px;">11:02</div>
<div class="t" style="left:784px;top:502.8px;height:9px;line-height:9px;color:#f0f0f0;font-size:5.6px;">2023/2/15</div>
<svg style="left:817px;top:499.5px" width="9" height="9"><path d="M0.5 0.5H7.8V5.8H4.6L3 7.6V5.8H0.5Z" fill="none" stroke="#f0f0f0" stroke-width=".8"/></svg>
</body></html>
